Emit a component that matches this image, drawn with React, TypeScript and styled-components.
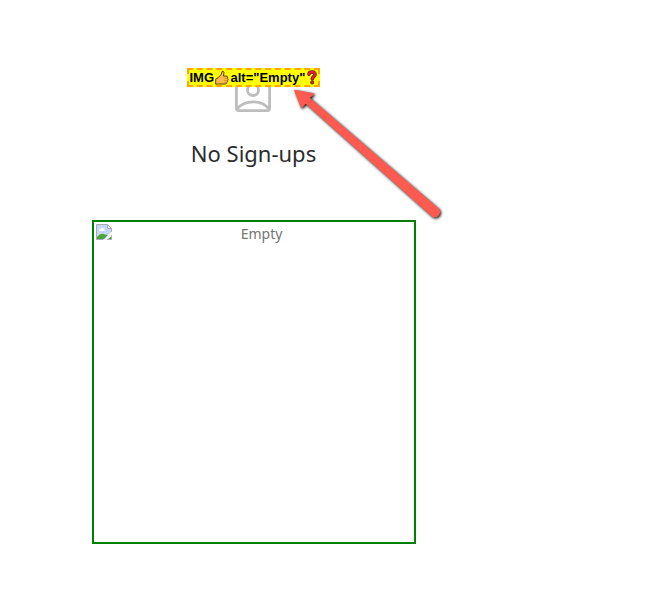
import React from "react";
import styled, { createGlobalStyle } from "styled-components";

const GlobalStyle = createGlobalStyle`
  * { box-sizing: border-box; }
  body { margin: 0; background: #fff; }
`;

const Page = styled.main`
  position: relative;
  width: 646px;
  height: 614px;
  padding: 68px 0 0 92px;
  overflow: hidden;
  font-family: "Noto Sans", sans-serif;
`;

const EmptyState = styled.section`
  display: flex;
  flex-direction: column;
  align-items: center;
  width: 324px;
`;

const IconHolder = styled.div`
  position: relative;
  display: flex;
  justify-content: center;
  width: 133px;
  height: 44px;
  margin-right: 2px;
  padding-top: 8px;
`;

const AltBadge = styled.div`
  position: absolute;
  top: 0;
  left: 0;
  display: flex;
  align-items: center;
  width: 133px;
  height: 19px;
  padding-left: 1px;
  border: 2px dashed orange;
  background: yellow;
  color: #000;
  font: bold 13px/15px "Liberation Sans", Arial, sans-serif;
  white-space: pre;
`;

const BadgeText = styled.span<{ $width: number }>`
  flex: none;
  width: ${(p) => p.$width}px;
`;

const Title = styled.h1`
  margin: 26px 1px 0 0;
  color: #2d2d2d;
  font-size: 22px;
  font-weight: 400;
  line-height: 30px;
`;

const ImageFrame = styled.div`
  display: flex;
  width: 324px;
  height: 324px;
  margin-top: 52px;
  padding: 2px;
  border: 2px solid green;
`;

const AltText = styled.span`
  flex: 1;
  padding-right: 1px;
  color: #757575;
  font-size: 14px;
  line-height: 20px;
  text-align: center;
`;

const Arrow = styled.svg`
  position: absolute;
  top: 80px;
  left: 280px;
  filter: drop-shadow(1px 1px 1.5px #000);
`;

const PersonIcon = () => (
  <svg width="36" height="36" viewBox="0 0 36 36" fill="none" stroke="#bdbdbd" strokeWidth="2.8">
    <rect x="1.4" y="1.4" width="33.2" height="33.2" rx="2" />
    <circle cx="18" cy="14" r="5.5" />
    <path d="M2 33C6 27.8 12 25.8 18 25.8S30 27.8 34 33" />
  </svg>
);

const ThumbIcon = () => (
  <svg width="16" height="15" viewBox="0 0 16 15">
    <path
      d="M.7 9.1 3.3 7.5 6.2 4.4 7.1 1.4Q8.7.8 9 2.6L8.5 6.1H11.8Q13.2 6.9 12.5 8.3 13.6 9.4 12.7 10.5 13 12 11.8 12.5 11.6 14 10.3 14H3.4L.7 14.2Z"
      fill="#ffb84b"
      stroke="#5c3b12"
      strokeLinejoin="round"
    />
    <path d="M9.5 8.4H12.2M9.5 10.5H12.2M9.3 12.4H11.5" stroke="#bd701c" strokeWidth=".6" />
  </svg>
);

const QuestionIcon = () => (
  <svg width="12" height="15" viewBox="0 0 12 15" fill="none" strokeLinecap="round">
    <path d="M3 4.2C3 1.2 9 1.2 9 4.5 9 6.7 6.3 6.4 6.3 9" stroke="#451111" strokeWidth="3.5" />
    <circle cx="6.2" cy="12.5" r="1.9" fill="#451111" />
    <path d="M3 4.2C3 1.2 9 1.2 9 4.5 9 6.7 6.3 6.4 6.3 9" stroke="#e3222b" strokeWidth="2.3" />
    <circle cx="6.2" cy="12.4" r="1.3" fill="#e3222b" />
  </svg>
);

const BrokenImageIcon = () => (
  <svg width="16" height="16" viewBox="0 0 16 16">
    <path d="M.5.5H11.5L15.5 4.5V8L7.5 15.5H.5Z" fill="#c4d7f5" />
    <path d="M11.5.5V4.5H15.5Z" fill="#fff" />
    <path d="M3 7Q2.8 5 4.8 5 5.5 3 7.3 4.2 9 4.4 8.8 7Z" fill="#fff" />
    <path d="M1 15V13Q4.8 8.2 9 10.5L12 11.3 8 15Z" fill="#4aa53b" />
    <path d="M11.5 15.5 15.5 12V15.5Z" fill="#4aa53b" />
    <path d="M15.5 8V4.5L11.5.5H.5V15.5H7.5M11.5.5V4.5H15.5M11 15.5H15.5V11" fill="none" stroke="#a8abb5" />
    <path d="M7.5 16 16 7.5V10.5L10.5 16Z" fill="#fff" />
  </svg>
);

export default function App() {
  return (
    <Page>
      <GlobalStyle />
      <EmptyState>
        <IconHolder>
          <PersonIcon />
          <AltBadge>
            <BadgeText $width={25}>IMG</BadgeText>
            <ThumbIcon />
            <BadgeText $width={75}>alt="Empty"</BadgeText>
            <QuestionIcon />
          </AltBadge>
        </IconHolder>
        <Title>No Sign-ups</Title>
        <ImageFrame>
          <BrokenImageIcon />
          <AltText>Empty</AltText>
        </ImageFrame>
      </EmptyState>
      <Arrow width="170" height="150" viewBox="0 0 170 150">
        <path
          d="M14.8 9.7 33.5 13.3Q34.8 14 33.7 15L29.8 17.8 158.5 128.5C163 133 157 140 152 136.5L25.7 23.7 22.4 27.5Q21.3 28.5 20.7 27L14.2 10.5Q14 9.5 14.8 9.7Z"
          fill="#ff5a4f"
        />
      </Arrow>
    </Page>
  );
}
